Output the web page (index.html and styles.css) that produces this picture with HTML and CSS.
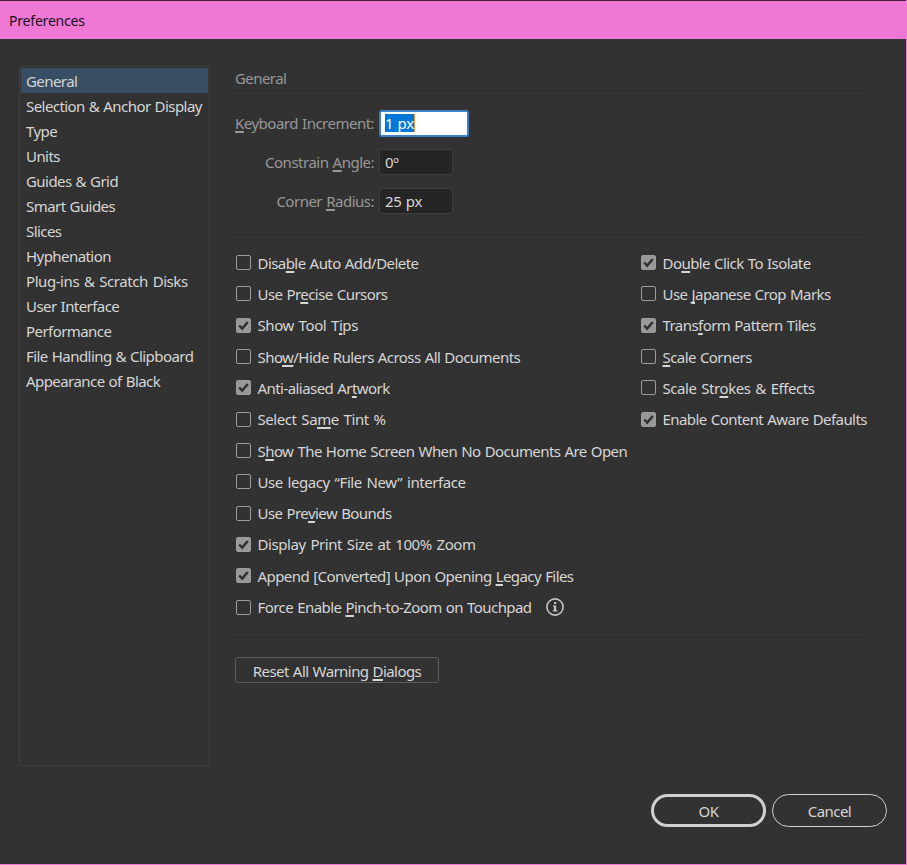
FILE: index.html
```html
<!DOCTYPE html>
<html lang="en">
<head>
<meta charset="utf-8">
<title>Preferences</title>
<link rel="stylesheet" href="styles.css">
</head>
<body>
<svg class="defs" aria-hidden="true"><symbol id="tick" viewBox="0 0 15 15"><path d="M3.2 7.5 6.2 10.6 11.8 4" fill="none" stroke="#303030" stroke-width="2.4"/></symbol></svg>
<div class="window">
  <header class="titlebar">Preferences</header>
  <main class="body">
    <nav class="sidebar">
      <a class="item active"><span>General</span></a>
      <a class="item"><span>Selection &amp; Anchor Display</span></a>
      <a class="item"><span>Type</span></a>
      <a class="item"><span>Units</span></a>
      <a class="item"><span>Guides &amp; Grid</span></a>
      <a class="item"><span>Smart Guides</span></a>
      <a class="item"><span>Slices</span></a>
      <a class="item"><span>Hyphenation</span></a>
      <a class="item loose"><span>Plug-ins &amp; Scratch Disks</span></a>
      <a class="item"><span>User Interface</span></a>
      <a class="item"><span>Performance</span></a>
      <a class="item"><span>File Handling &amp; Clipboard</span></a>
      <a class="item"><span>Appearance of Black</span></a>
    </nav>
    <section class="panel">
      <h1 class="heading">General</h1>
      <div class="fields">
        <label><span><u>K</u>eyboard Increment:</span></label><div class="field focused"><span class="selected">1 px</span></div>
        <label><span>Constrain <u>A</u>ngle:</span></label><div class="field"><span>0º</span></div>
        <label><span>Corner <u>R</u>adius:</span></label><div class="field"><span>25 px</span></div>
      </div>
      <div class="options">
        <div class="column">
          <label class="option"><i class="box"></i><span>Disa<u>b</u>le Auto Add/Delete</span></label>
          <label class="option"><i class="box"></i><span>Use Pr<u>e</u>cise Cursors</span></label>
          <label class="option loose"><i class="box on"><svg><use href="#tick"/></svg></i><span>Show Tool T<u>i</u>ps</span></label>
          <label class="option"><i class="box"></i><span>Sho<u>w</u>/Hide Rulers Across All Documents</span></label>
          <label class="option"><i class="box on"><svg><use href="#tick"/></svg></i><span>Anti-aliased Ar<u>t</u>work</span></label>
          <label class="option loose"><i class="box"></i><span>Select Sa<u>m</u>e Tint %</span></label>
          <label class="option"><i class="box"></i><span>S<u>h</u>ow The Home Screen When No Documents Are Open</span></label>
          <label class="option loose"><i class="box"></i><span>Use legacy “File New” interface</span></label>
          <label class="option"><i class="box"></i><span>Use Pre<u>v</u>iew Bounds</span></label>
          <label class="option loose"><i class="box on"><svg><use href="#tick"/></svg></i><span>Display Print Size at 100% Zoom</span></label>
          <label class="option"><i class="box on"><svg><use href="#tick"/></svg></i><span>Append [Converted] Upon Opening <u>L</u>egacy Files</span></label>
          <label class="option"><i class="box"></i><span>Force Enable <u>P</u>inch-to-Zoom on Touchpad</span><svg class="info" viewBox="0 0 18 18"><circle cx="9" cy="9" r="8.1" fill="none" stroke="#c4c4c4" stroke-width="1.6"/><path d="M8 4h2.2v2.1H8zM7 7.4h3.2v4.9h1.1v1.3H6.8v-1.3h1.1V8.7H7z" fill="#c4c4c4"/></svg></label>
        </div>
        <div class="column">
          <label class="option"><i class="box on"><svg><use href="#tick"/></svg></i><span>Do<u>u</u>ble Click To Isolate</span></label>
          <label class="option"><i class="box"></i><span>Use <u>J</u>apanese Crop Marks</span></label>
          <label class="option"><i class="box on"><svg><use href="#tick"/></svg></i><span>Trans<u>f</u>orm Pattern Tiles</span></label>
          <label class="option"><i class="box"></i><span><u>S</u>cale Corners</span></label>
          <label class="option loose"><i class="box"></i><span>Scale Str<u>o</u>kes &amp; Effects</span></label>
          <label class="option"><i class="box on"><svg><use href="#tick"/></svg></i><span>Enable Content Aware Defaults</span></label>
        </div>
      </div>
      <button class="reset"><span>Reset All Warning <u>D</u>ialogs</span></button>
    </section>
  </main>
  <footer class="actions">
    <button class="pill primary">OK</button>
    <button class="pill">Cancel</button>
  </footer>
</div>
</body>
</html>
```
FILE: styles.css
```css
* { box-sizing: border-box; }
body { margin: 0; background: #323232; color: #d6d6d6; font: 15px/20px "Noto Sans", sans-serif; letter-spacing: -0.56px; word-spacing: 0.7px; }
button { font: inherit; letter-spacing: inherit; word-spacing: inherit; color: inherit; background: none; padding: 0; }
u { text-decoration: underline 2px; text-underline-offset: 2px; text-decoration-skip-ink: none; }
.defs { display: none; }
.window { width: 907px; height: 865px; display: flex; flex-direction: column; border: solid #ee78d4; border-width: 0 1px 1px 0; }
.titlebar { height: 39px; padding: 10px 9px 0; border-top: 1px solid #48213f; background: #ee78d4; color: #20101c; font-size: 14px; line-height: 20px; letter-spacing: -0.2px; }
.body { display: flex; gap: 25px; padding: 28px 0 0 19px; }
.sidebar { width: 191px; height: 700px; margin-top: -1px; border: 1px solid #3f3f3f; border-radius: 2px; padding: 1px; }
.item { display: block; height: 25px; padding: 3px 0 0 5px; white-space: nowrap; }
.item.active { background: #384e64; }
.panel { width: 633px; }
.heading { margin: 0; height: 24px; padding-top: 1px; border-bottom: 1px solid #292929; font-size: 15px; font-weight: 400; color: #989898; }
.fields { display: grid; grid-template-columns: 139px auto; grid-auto-rows: 39px; column-gap: 5px; align-items: center; justify-content: start; padding-top: 12px; height: 144px; border-bottom: 1px solid #292929; color: #989898; }
.fields label { text-align: right; white-space: nowrap; letter-spacing: -0.5px; }
.field { width: 74px; height: 26px; border: 1px solid #3f3f3f; border-radius: 3px; background: #252525; color: #d6d6d6; padding: 3px 5px; line-height: 18px; letter-spacing: -0.3px; }
.field.focused { width: 90px; height: 27px; margin-top: 1px; border: 2px solid #3f80c4; background: #fff; padding: 2px 4px; }
.selected { display: inline-block; height: 18px; background: #0078d7; color: #fff; border-right: 1px solid #ee9340; }
.options { display: flex; height: 403px; padding-top: 12px; border-bottom: 1px solid #292929; }
.column { width: 405px; display: grid; grid-auto-rows: 31.32px; align-content: start; }
.column + .column { width: 228px; }
.option { display: flex; align-items: center; white-space: nowrap; padding-left: 1px; }
.loose { letter-spacing: -0.43px; word-spacing: 1.3px; }
.box { width: 15px; height: 15px; flex: none; margin-right: 6.5px; border: 1px solid #9c9c9c; border-radius: 2px; }
.box.on { background: #989898; }
.box svg { display: block; width: 15px; height: 15px; margin: -1px; }
.info { width: 18px; height: 18px; margin-left: 14px; }
.reset { display: block; width: 204px; height: 26px; margin-top: 19px; border: 1px solid #5b5b5b; border-radius: 3px; padding-top: 2px; }
.actions { display: flex; gap: 6px; justify-content: flex-end; margin-top: 28px; padding-right: 19px; }
.pill { width: 115px; height: 33px; border: 1.5px solid #d0d0d0; border-radius: 17px; }
.pill.primary { border-width: 3px; }
```
